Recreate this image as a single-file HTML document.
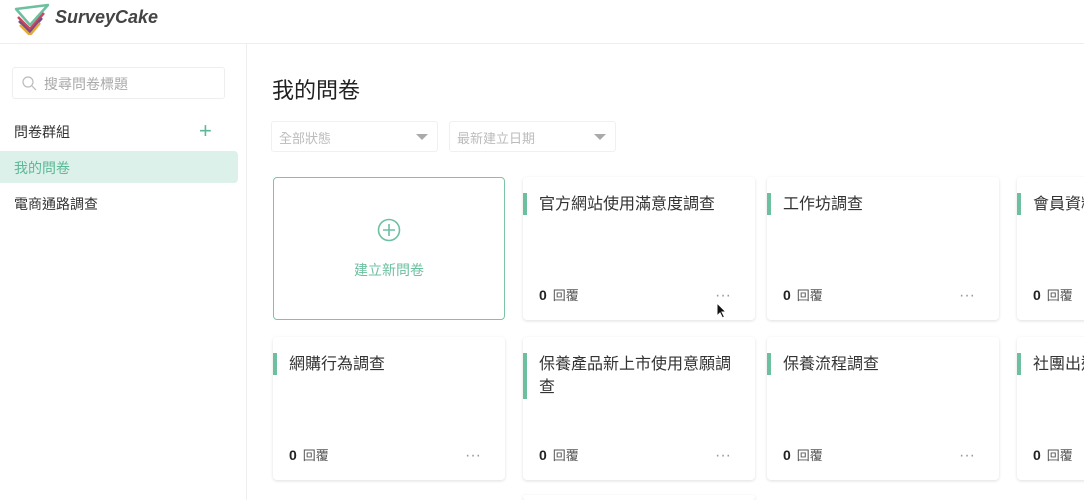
<!DOCTYPE html>
<html><head><meta charset="utf-8"><style>
*{box-sizing:border-box;margin:0;padding:0}
html,body{width:1084px;height:500px;overflow:hidden}
body{background:#fff;font-family:"Liberation Sans","Noto Sans CJK TC",sans-serif;color:#333;position:relative}
.hdr{position:absolute;left:0;top:0;width:1084px;height:44px;border-bottom:1px solid #eee}
.logo{position:absolute;left:55px;top:7px;font-size:18px;font-style:italic;font-weight:bold;color:#444}
.side{position:absolute;left:0;top:44px;width:247px;height:456px;border-right:1px solid #eee}
.search{position:absolute;left:12px;top:23px;width:213px;height:32px;border:1px solid #eee;border-radius:3px;font-size:14px;color:#aaa;padding:6px 0 0 31px}
.grp{position:absolute;left:14px;top:78px;font-size:14px;color:#333}
.plus{position:absolute;left:199px;top:76px;font-size:22px;line-height:22px;color:#5cb896;font-weight:300}
.act{position:absolute;left:0;top:107px;width:238px;height:32px;background:#dcf1e9;border-radius:0 4px 4px 0;font-size:14px;color:#5cb896;padding:7px 0 0 14px}
.it{position:absolute;left:14px;top:150px;font-size:14px;color:#333}
h1{position:absolute;left:272px;top:73px;font-size:22px;font-weight:normal;color:#222}
.sel{position:absolute;top:121px;height:31px;border:1px solid #f0f0f0;border-radius:3px;font-size:13px;color:#bbb;padding:6px 0 0 7px}
.tri{position:absolute;right:9px;top:12px;width:0;height:0;border-left:6px solid transparent;border-right:6px solid transparent;border-top:6px solid #aaa}
.card{position:absolute;width:232px;height:143px;background:#fff;border-radius:4px;box-shadow:0 1px 3px rgba(0,0,0,.13)}
.card .bar{position:absolute;left:0;top:16px;width:4px;height:22px;background:#6cc0a0}
.card .t{position:absolute;left:16px;top:16px;width:196px;font-size:16px;line-height:23px;color:#333}
.card .c{position:absolute;left:16px;top:108px;font-size:13px;color:#555}
.card .c b{font-size:14px;color:#222;margin-right:6px}
.card .d{position:absolute;right:24px;top:110px;font-size:16px;color:#999}
.new{position:absolute;left:273px;top:177px;width:232px;height:143px;border:1px solid #7cc4a8;border-radius:4px;text-align:center}
</style></head><body>
<div class="hdr">
<svg style="position:absolute;left:14px;top:3px" width="38" height="32" viewBox="0 0 38 32">
<path d="M2 6 L34 2 L16 22 Z" fill="none" stroke="#6cc0a0" stroke-width="2.5" stroke-linejoin="round"/>
<path d="M4 14 L16 26 L30 10" fill="none" stroke="#c9485f" stroke-width="2.5"/>
<path d="M5 18 L16 29 L28 15" fill="none" stroke="#7a4a8a" stroke-width="2.5"/>
<path d="M6 22 L16 32 L26 20" fill="none" stroke="#e4a93e" stroke-width="2.5"/>
</svg>
<div class="logo">SurveyCake</div>
</div>
<div class="side">
<div class="search"><svg style="position:absolute;left:9px;top:8px" width="15" height="15" viewBox="0 0 15 15"><circle cx="6" cy="6" r="5" fill="none" stroke="#bbb" stroke-width="1.2"/><path d="M10 10 L14 14" stroke="#bbb" stroke-width="1.2"/></svg>搜尋問卷標題</div>
<div class="grp">問卷群組</div>
<div class="plus">+</div>
<div class="act">我的問卷</div>
<div class="it">電商通路調查</div>
</div>
<h1>我的問卷</h1>
<div class="sel" style="left:271px;width:167px">全部狀態<div class="tri"></div></div>
<div class="sel" style="left:449px;width:167px">最新建立日期<div class="tri"></div></div>
<div class="new">
<svg style="position:absolute;left:103px;top:40px" width="24" height="24" viewBox="0 0 24 24"><circle cx="12" cy="12" r="10.5" fill="none" stroke="#6cc0a0" stroke-width="1.6"/><path d="M12 6v12M6 12h12" stroke="#6cc0a0" stroke-width="1.6"/></svg>
<div style="position:absolute;left:0;width:100%;top:82px;font-size:14px;color:#6cc0a0">建立新問卷</div>
</div>
<div class="card" style="left:523px;top:177px"><div class="bar"></div><div class="t">官方網站使用滿意度調查</div><div class="c"><b>0</b>回覆</div><div class="d">···</div></div>
<div class="card" style="left:767px;top:177px"><div class="bar"></div><div class="t">工作坊調查</div><div class="c"><b>0</b>回覆</div><div class="d">···</div></div>
<div class="card" style="left:1017px;top:177px"><div class="bar"></div><div class="t">會員資料</div><div class="c"><b>0</b>回覆</div></div>
<div class="card" style="left:273px;top:337px"><div class="bar"></div><div class="t">網購行為調查</div><div class="c"><b>0</b>回覆</div><div class="d">···</div></div>
<div class="card" style="left:523px;top:337px"><div class="bar" style="height:46px"></div><div class="t">保養產品新上市使用意願調查</div><div class="c"><b>0</b>回覆</div><div class="d">···</div></div>
<div class="card" style="left:767px;top:337px"><div class="bar"></div><div class="t">保養流程調查</div><div class="c"><b>0</b>回覆</div><div class="d">···</div></div>
<div class="card" style="left:1017px;top:337px"><div class="bar"></div><div class="t">社團出遊</div><div class="c"><b>0</b>回覆</div></div>
<div class="card" style="left:523px;top:495px;height:5px"></div>
<svg style="position:absolute;left:716px;top:302px" width="12" height="18" viewBox="0 0 12 18"><path d="M1 1 L1 14 L4 11 L6.5 16 L8.5 15 L6 10 L10 10 Z" fill="#111" stroke="#fff" stroke-width="1"/></svg>
</body></html>
